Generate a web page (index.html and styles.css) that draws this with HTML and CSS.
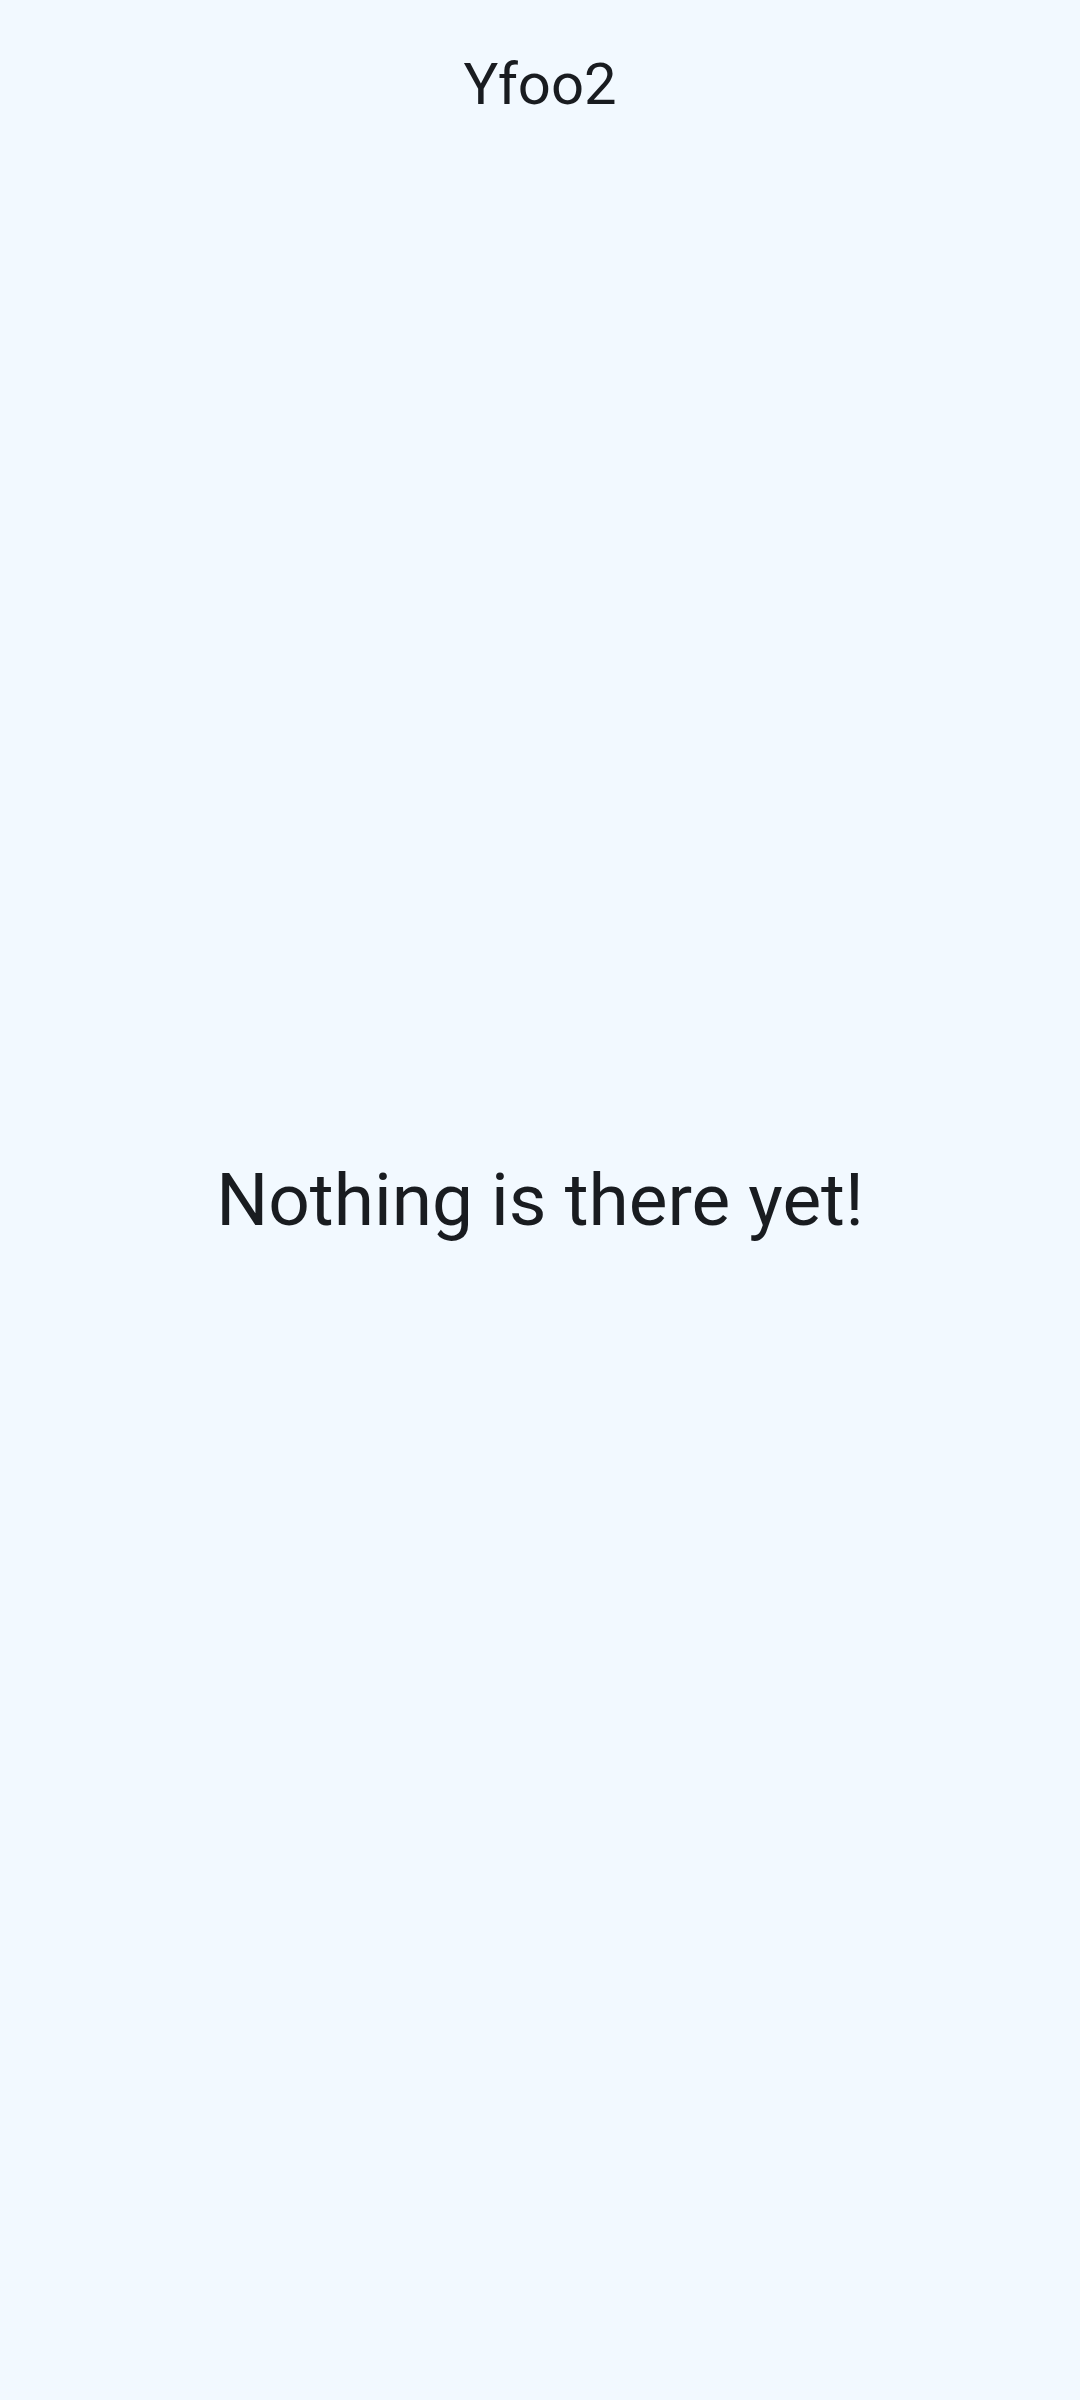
FILE: index.html
```html
<!DOCTYPE html>
<html>
<head>
<meta charset="utf-8">
<link rel="stylesheet" href="styles.css">
</head>
<body>
<div class="page">
  <header class="topbar"><h1 class="title">Yfoo2</h1></header>
  <main class="content"><p class="empty">Nothing is there yet!</p></main>
</div>
</body>
</html>
```
FILE: styles.css
```css
html, body {
  margin: 0;
  padding: 0;
  background: #f2f9ff;
}
.page {
  display: flex;
  flex-direction: column;
  height: 2400px;
  font-family: Roboto, "Noto Sans", sans-serif;
  color: #191c20;
}
.topbar {
  height: 150px;
  box-sizing: border-box;
  padding-top: 50px;
  display: flex;
  justify-content: center;
}
.title {
  margin: 0;
  font-size: 58px;
  font-weight: 400;
  line-height: normal;
}
.content {
  flex: 1;
  padding-bottom: 150px;
  display: flex;
  align-items: center;
  justify-content: center;
}
.empty {
  margin: 0;
  font-size: 73px;
  font-weight: 400;
  line-height: normal;
}
```
